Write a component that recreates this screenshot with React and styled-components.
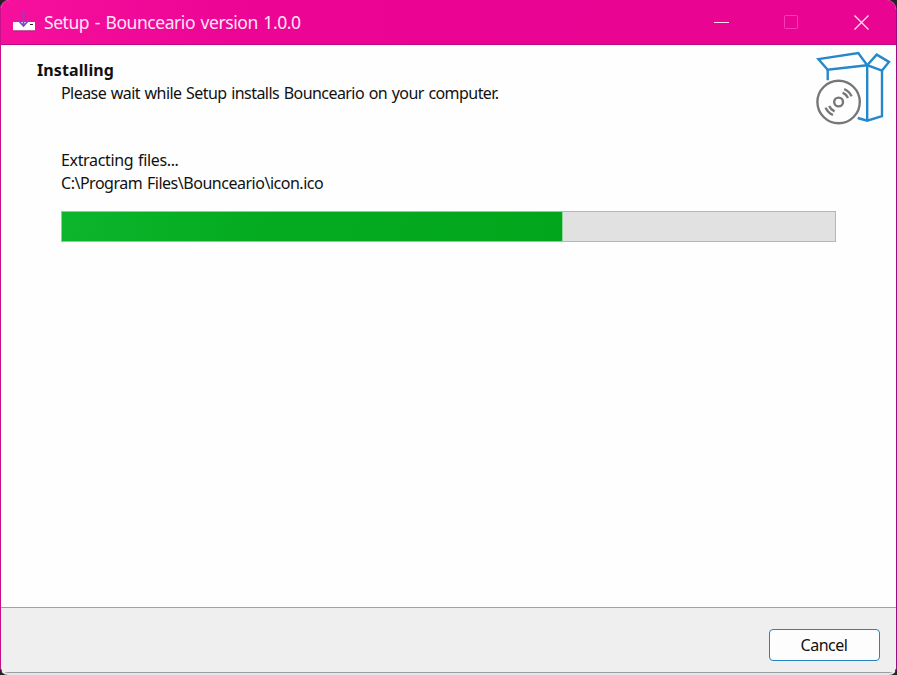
import React from 'react';
import styled, { createGlobalStyle } from 'styled-components';

const Global = createGlobalStyle`
  * { box-sizing: border-box; }
  body { margin: 0; background: #2a2027; overflow: hidden; }
`;

const Window = styled.main`
  width: 897px;
  height: 675px;
  display: flex;
  flex-direction: column;
  border: 1px solid #c5108a;
  border-top: 0;
  border-right-color: #97107a;
  border-bottom: 2px solid #e6e6e8;
  border-radius: 9px 10px 8px 8px;
  overflow: hidden;
  background: #fefefe;
  color: #111;
  font-family: 'Noto Sans', sans-serif;
  font-size: 16px;
`;

const TitleBar = styled.header`
  height: 45px;
  flex: none;
  display: flex;
  align-items: center;
  padding-left: 11px;
  background: linear-gradient(100deg, #f6109c 0%, #ec0495 28%, #e90491 100%);
  border-bottom: 1px solid #c00680;
  color: #ffe4f6;
`;

const Title = styled.h1`
  margin: 0 auto 0 8px;
  font-size: 17.5px;
  font-weight: 400;
  line-height: 44px;
  letter-spacing: ${(p) => p.$tracking}px;
  word-spacing: 1.5px;
  white-space: nowrap;
`;

const Controls = styled.div`
  display: flex;
  align-self: stretch;
`;

const ControlButton = styled.button`
  width: 70px;
  padding: 0 0 0 1px;
  border: 0;
  background: transparent;
  color: ${(p) => (p.disabled ? '#f83cb8' : '#ffe4f6')};
  display: grid;
  place-items: center;
`;

const Content = styled.section`
  flex: 1;
  display: flex;
  flex-direction: column;
`;

const Heading = styled.div`
  height: 104px;
  display: flex;
  justify-content: space-between;
  padding: 3px 0 0 36px;
`;

const HeadingText = styled.div`
  padding-top: 11px;
`;

const Line = styled.p`
  margin: 0;
  height: 23px;
  line-height: 23px;
  white-space: nowrap;
  padding-left: ${(p) => p.$indent || 0}px;
  font-weight: ${(p) => (p.$bold ? 700 : 400)};
  letter-spacing: ${(p) => p.$tracking}px;
  word-spacing: 1px;
`;

const Progress = styled.div`
  padding: 0 60px;
`;

const Track = styled.div`
  width: 775px;
  height: 31px;
  margin-top: 16px;
  border: 1px solid #b4b6b6;
  background: #e2e1e2;
`;

const Fill = styled.div`
  height: 100%;
  background: linear-gradient(100deg, #0cb52c 0%, #04ab20 40%, #02a61c 100%);
  border-right: 1px solid #8fd99b;
`;

const Footer = styled.footer`
  height: 66px;
  flex: none;
  display: flex;
  justify-content: flex-end;
  align-items: flex-start;
  padding: 21px 16px 0 0;
  background: #efefef;
  border-top: 1px solid #a0a0a2;
  border-bottom: 1px solid #9b9ba2;
`;

const CancelButton = styled.button`
  width: 111px;
  height: 32px;
  padding: 0 1px 0 0;
  border: 1px solid #2583c2;
  border-radius: 4px;
  background: #fdfdfd;
  color: #111;
  font: 16px/30px 'Noto Sans', sans-serif;
  letter-spacing: ${(p) => p.$tracking}px;
`;

const SetupIcon = () => (
  <svg width="24" height="24" viewBox="0 0 24 24">
    <path d="M1 12h22v8.5H1z" fill="#fff" />
    <path d="M1 21h22" stroke="#95306f" />
    <path d="M18 14.5h3" stroke="#3b1c35" />
    <path d="M11.5 1v15M6.5 10.5l5 5.5 5-5.5" fill="none" stroke="#7a4cc4" strokeWidth="1.8" />
  </svg>
);

const BoxIcon = () => (
  <svg width="80" height="80" viewBox="0 0 80 80" fill="none">
    <g stroke="#2488ca" strokeWidth="2.4">
      <path d="M2.3 11.1 42.3 5l8.9 12.2-39.5 4.5z" />
      <path d="m51.2 17.2 9.5-10.6 12.3 7.3-7 8.7z" />
      <path d="M11.7 21.5v10.8M51.2 17.2v55.6M66 22.5v45.7l-14.8 4.5-9.5-2.7" />
    </g>
    <g stroke="#777779" strokeWidth="2.4">
      <circle cx="22.6" cy="54" r="21.2" />
      <circle cx="22.6" cy="54" r="4.4" />
      <path d="M26.6 44.6a10.2 10.2 0 0 1 5.4 5.4M28.2 41a14.1 14.1 0 0 1 7.4 7.4" />
      <path d="M18.6 63.4a10.2 10.2 0 0 1-5.4-5.4M17 67a14.1 14.1 0 0 1-7.4-7.4" />
    </g>
  </svg>
);

export default function App() {
  const progress = 501 / 773;
  return (
    <>
      <Global />
      <Window>
        <TitleBar>
          <SetupIcon />
          <Title $tracking={-0.45}>Setup - Bounceario version 1.0.0</Title>
          <Controls>
            <ControlButton aria-label="Minimize">
              <svg width="16" height="16"><path d="M0 8.5h15" stroke="currentColor" /></svg>
            </ControlButton>
            <ControlButton aria-label="Maximize" disabled>
              <svg width="16" height="16"><rect x="0.5" y="1.5" width="13" height="13" rx="1" fill="none" stroke="currentColor" /></svg>
            </ControlButton>
            <ControlButton aria-label="Close">
              <svg width="16" height="16"><path d="m.5 1.5 14 14M14.5 1.5l-14 14" stroke="currentColor" strokeWidth="1.3" /></svg>
            </ControlButton>
          </Controls>
        </TitleBar>
        <Content>
          <Heading>
            <HeadingText>
              <Line $bold $tracking={0.1}>Installing</Line>
              <Line $indent={24} $tracking={-0.56}>Please wait while Setup installs Bounceario on your computer.</Line>
            </HeadingText>
            <BoxIcon />
          </Heading>
          <Progress>
            <Line $tracking={-0.35}>Extracting files...</Line>
            <Line $tracking={-0.48}>C:\Program Files\Bounceario\icon.ico</Line>
            <Track><Fill style={{ width: `${progress * 100}%` }} /></Track>
          </Progress>
        </Content>
        <Footer>
          <CancelButton $tracking={-0.5}>Cancel</CancelButton>
        </Footer>
      </Window>
    </>
  );
}
